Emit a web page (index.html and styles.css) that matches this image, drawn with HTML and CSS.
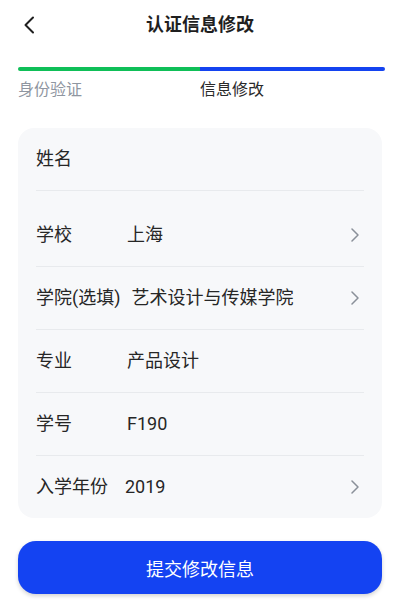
FILE: index.html
```html
<!DOCTYPE html>
<html lang="zh-CN">
<head>
<meta charset="utf-8">
<title>认证信息修改</title>
<link rel="stylesheet" href="styles.css">
</head>
<body>
<div class="page">
  <header class="topbar">
    <div class="back">
      <svg width="12" height="18" viewBox="0 0 12 18"><polyline points="10,1.5 2.5,9 10,16.5" fill="none" stroke="#1f1f1f" stroke-width="2" stroke-linecap="round" stroke-linejoin="round"/></svg>
    </div>
    <h1 class="title">认证信息修改</h1>
    <div></div>
  </header>

  <div class="progress">
    <div class="progress-done"></div>
    <div class="progress-now"></div>
  </div>
  <div class="steps">
    <span class="step step-past">身份验证</span>
    <span class="step step-current">信息修改</span>
  </div>

  <section class="card">
    <div class="row"><span class="label">姓名</span></div>
    <div class="row row-tall"><span class="label">学校</span><span class="value">上海</span><svg class="arrow" width="12" height="14" viewBox="0 0 12 14"><polyline points="2,1 8,7 2,13" fill="none" stroke="#8a9099" stroke-width="1.5" stroke-linecap="round" stroke-linejoin="round"/></svg></div>
    <div class="row"><span class="label">学院(选填)</span><span class="value">艺术设计与传媒学院</span><svg class="arrow" width="12" height="14" viewBox="0 0 12 14"><polyline points="2,1 8,7 2,13" fill="none" stroke="#8a9099" stroke-width="1.5" stroke-linecap="round" stroke-linejoin="round"/></svg></div>
    <div class="row"><span class="label">专业</span><span class="value">产品设计</span></div>
    <div class="row"><span class="label">学号</span><span class="value">F190</span></div>
    <div class="row row-last"><span class="label">入学年份</span><span class="value value-year">2019</span><svg class="arrow" width="12" height="14" viewBox="0 0 12 14"><polyline points="2,1 8,7 2,13" fill="none" stroke="#8a9099" stroke-width="1.5" stroke-linecap="round" stroke-linejoin="round"/></svg></div>
  </section>

  <button class="submit">提交修改信息</button>
</div>
</body>
</html>
```

FILE: styles.css
```css
* { box-sizing: border-box; }
html, body { margin: 0; padding: 0; background: #ffffff; }
body {
  font-family: Roboto, "Noto Sans CJK SC", sans-serif;
  color: #262626;
}
.page { width: 400px; height: 608px; overflow: hidden; }

.topbar {
  height: 50px;
  display: grid;
  grid-template-columns: 1fr auto 1fr;
  align-items: center;
}
.back { padding-left: 23px; display: flex; align-items: center; }
.title {
  margin: 0;
  font-size: 18px;
  font-weight: 700;
  line-height: 24px;
  color: #1f1f1f;
}

.progress {
  margin: 17px 15px 0 18px;
  height: 4px;
  display: flex;
  border-radius: 2px;
  overflow: hidden;
}
.progress-done { width: 182px; background: #0fbf58; }
.progress-now { flex: 1; background: #1443f0; }

.steps {
  margin: 8px 18px 0 18px;
  display: grid;
  grid-template-columns: 182px 1fr;
  font-size: 16px;
  line-height: 22px;
}
.step-past { color: #8f96a1; }
.step-current { color: #2a2a2a; }

.card {
  margin: 27px 18px 0 18px;
  background: #f7f8fa;
  border-radius: 16px;
  padding: 0 18px;
}
.row {
  height: 63px;
  display: flex;
  align-items: center;
  gap: 11px;
  border-bottom: 1px solid #e8eaed;
  font-size: 18px;
  line-height: 24px;
}
.row-tall { height: 76px; padding-top: 13px; }
.row-last { height: 62px; border-bottom: none; }
.label { min-width: 80px; color: #262626; }
.value { flex: 1; color: #262626; }
.value-year { margin-left: -2px; }
.arrow { margin-right: 2px; }

.submit {
  display: block;
  width: 364px;
  height: 53px;
  margin: 23px 18px 0 18px;
  border: none;
  border-radius: 18px;
  background: #1443f2;
  color: #ffffff;
  font-family: Roboto, "Noto Sans CJK SC", sans-serif;
  font-size: 18px;
  box-shadow: 0 2px 4px rgba(0, 0, 0, 0.18);
}
```
